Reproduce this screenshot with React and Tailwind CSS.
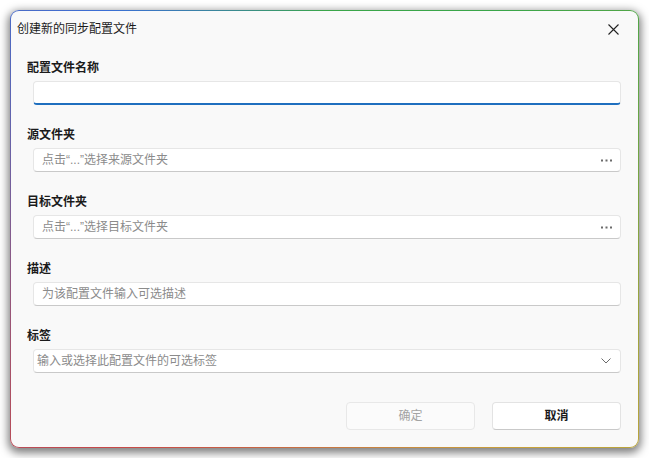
import React from "react";

const font = { fontFamily: '"Liberation Sans", "Noto Sans CJK SC", sans-serif' };

function Dots() {
  return (
    <svg width="11" height="3" viewBox="0 0 11 3" className="shrink-0">
      <rect x="0" y="0.5" width="2" height="2" fill="#6b6b6b" />
      <rect x="4.5" y="0.5" width="2" height="2" fill="#6b6b6b" />
      <rect x="9" y="0.5" width="2" height="2" fill="#6b6b6b" />
    </svg>
  );
}

function Label({ children }) {
  return (
    <div className="h-[16px] leading-[16px] text-[12px] font-bold text-[#1b1b1b] pl-[16px]">
      {children}
    </div>
  );
}

function Field({ label, placeholder, right, focused, combo, first }) {
  return (
    <div className={first ? "" : "mt-[22px]"}>
      <Label>{label}</Label>
      <div
        className={
          "mt-[5px] ml-[22px] mr-[17px] h-[24px] flex items-center rounded-[4px] bg-white border border-[#e6e6e6] " +
          (focused
            ? "border-b-2 border-b-[#1f6fbf] "
            : "border-b-[#c9c9c9] ") +
          (combo ? "pl-[3px] pr-[9px]" : "pl-[8px] pr-[8px]")
        }
      >
        <span className="flex-1 text-[12px] leading-[16px] text-[#8b8b8b] truncate">
          {placeholder}
        </span>
        {right}
      </div>
    </div>
  );
}

export default function App() {
  return (
    <div className="w-[649px] h-[458px] bg-white pt-[10px] pl-[10px]" style={font}>
      <div className="w-[629px] h-[438px] rounded-[9px] p-[1px] bg-[conic-gradient(#3aa64a_0deg,#3aa64a_40deg,#c9a43a_135deg,#c84848_225deg,#3a6fd6_315deg,#3aa64a_360deg)] shadow-[0_3px_8px_2px_rgba(0,0,0,0.5)]">
        <div className="w-full h-full rounded-[8px] bg-[#f9f9f9] flex flex-col">
          <div className="h-[36px] shrink-0 flex items-center justify-between pl-[6px] pr-[19px]">
            <span className="text-[12px] text-[#1b1b1b]">创建新的同步配置文件</span>
            <svg width="11" height="11" viewBox="0 0 11 11">
              <path d="M0.5 0.5 L10.5 10.5 M10.5 0.5 L0.5 10.5" stroke="#222" strokeWidth="1.1" />
            </svg>
          </div>
          <div className="pt-[13px] flex flex-col">
            <Field first label="配置文件名称" placeholder="" focused />
            <Field label="源文件夹" placeholder="点击“...”选择来源文件夹" right={<Dots />} />
            <Field label="目标文件夹" placeholder="点击“...”选择目标文件夹" right={<Dots />} />
            <Field label="描述" placeholder="为该配置文件输入可选描述" />
            <Field
              label="标签"
              combo
              placeholder="输入或选择此配置文件的可选标签"
              right={
                <svg width="10" height="6" viewBox="0 0 10 6">
                  <path d="M0.5 0.5 L5 5 L9.5 0.5" fill="none" stroke="#6b6b6b" strokeWidth="1" />
                </svg>
              }
            />
          </div>
          <div className="mt-[29px] flex justify-end gap-[17px] pr-[17px]">
            <div className="w-[129px] h-[28px] rounded-[4px] border border-[#e8e8e8] bg-[#fbfbfb] flex items-center justify-center text-[12px] text-[#a3a3a3]">
              确定
            </div>
            <div className="w-[129px] h-[28px] rounded-[4px] border border-[#e3e3e3] border-b-[#c9c9c9] bg-white flex items-center justify-center text-[12px] font-bold text-[#1b1b1b]">
              取消
            </div>
          </div>
        </div>
      </div>
    </div>
  );
}
